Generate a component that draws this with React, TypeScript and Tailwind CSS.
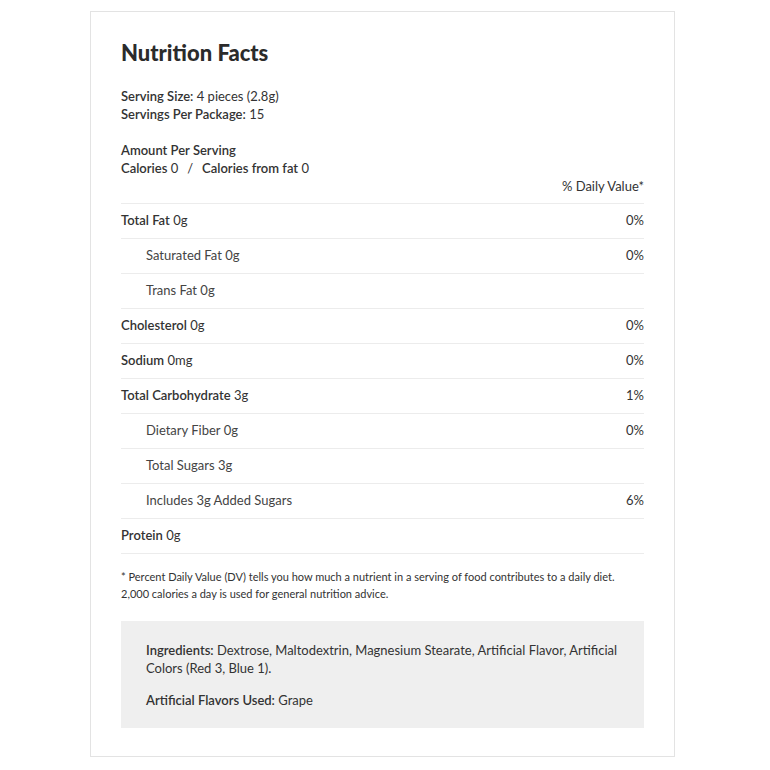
import React from 'react'

type Row = { label: string; value: string; dv?: string; sub?: boolean }

const ROWS: Row[] = [
    { label: 'Total Fat', value: '0g', dv: '0%' },
    { label: 'Saturated Fat', value: '0g', dv: '0%', sub: true },
    { label: 'Trans Fat', value: '0g', sub: true },
    { label: 'Cholesterol', value: '0g', dv: '0%' },
    { label: 'Sodium', value: '0mg', dv: '0%' },
    { label: 'Total Carbohydrate', value: '3g', dv: '1%' },
    { label: 'Dietary Fiber', value: '0g', dv: '0%', sub: true },
    { label: 'Total Sugars', value: '3g', sub: true },
    { label: 'Includes 3g Added Sugars', value: '', dv: '6%', sub: true },
    { label: 'Protein', value: '0g' },
]

const App = () => {
    return (
        <div
            className="w-[770px] h-[770px] bg-white text-[#333] pt-[11px] pl-[90px]"
            style={{ fontFamily: 'Lato, "Open Sans", sans-serif' }}
        >
            <div className="w-[585px] h-[746px] border border-[#e3e3e3] pt-[26px] px-[30px]">
                <h1 className="text-[22px] leading-[30px] font-black text-[#2b2b2b]">
                    Nutrition Facts
                </h1>

                <div className="mt-[19px] text-[13px] leading-[18px]">
                    <p>
                        <span className="font-semibold">Serving Size:</span> 4 pieces (2.8g)
                    </p>
                    <p>
                        <span className="font-semibold">Servings Per Package:</span> 15
                    </p>
                </div>

                <div className="mt-[18px] text-[13px] leading-[18px]">
                    <p className="font-semibold">Amount Per Serving</p>
                    <p>
                        <span className="font-semibold">Calories</span> 0
                        <span className="mx-[9px]">/</span>
                        <span className="font-semibold">Calories from fat</span> 0
                    </p>
                    <p className="text-right">% Daily Value*</p>
                </div>

                <div className="mt-[8px] border-b border-[#ececec]">
                    {ROWS.map((row) => (
                        <div
                            key={row.label}
                            className="h-[35px] border-t border-[#ececec] flex items-center justify-between text-[13px]"
                        >
                            <p className={row.sub ? 'pl-[25px] text-[#444]' : ''}>
                                {row.sub ? (
                                    `${row.label}${row.value ? ' ' + row.value : ''}`
                                ) : (
                                    <>
                                        <span className="font-semibold">{row.label}</span> {row.value}
                                    </>
                                )}
                            </p>
                            {row.dv && <p>{row.dv}</p>}
                        </div>
                    ))}
                </div>

                <p className="mt-[14px] text-[11px] leading-[17px]">
                    * Percent Daily Value (DV) tells you how much a nutrient in a serving of food contributes to a daily diet.
                    <br />
                    2,000 calories a day is used for general nutrition advice.
                </p>

                <div className="mt-[19px] bg-[#efefef] px-[25px] pt-[20px] pb-[19px] text-[13px] leading-[18px]">
                    <p>
                        <span className="font-semibold">Ingredients:</span> Dextrose, Maltodextrin, Magnesium Stearate, Artificial Flavor, Artificial Colors (Red 3, Blue 1).
                    </p>
                    <p className="mt-[14px]">
                        <span className="font-semibold">Artificial Flavors Used:</span> Grape
                    </p>
                </div>
            </div>
        </div>
    )
}

export default App
